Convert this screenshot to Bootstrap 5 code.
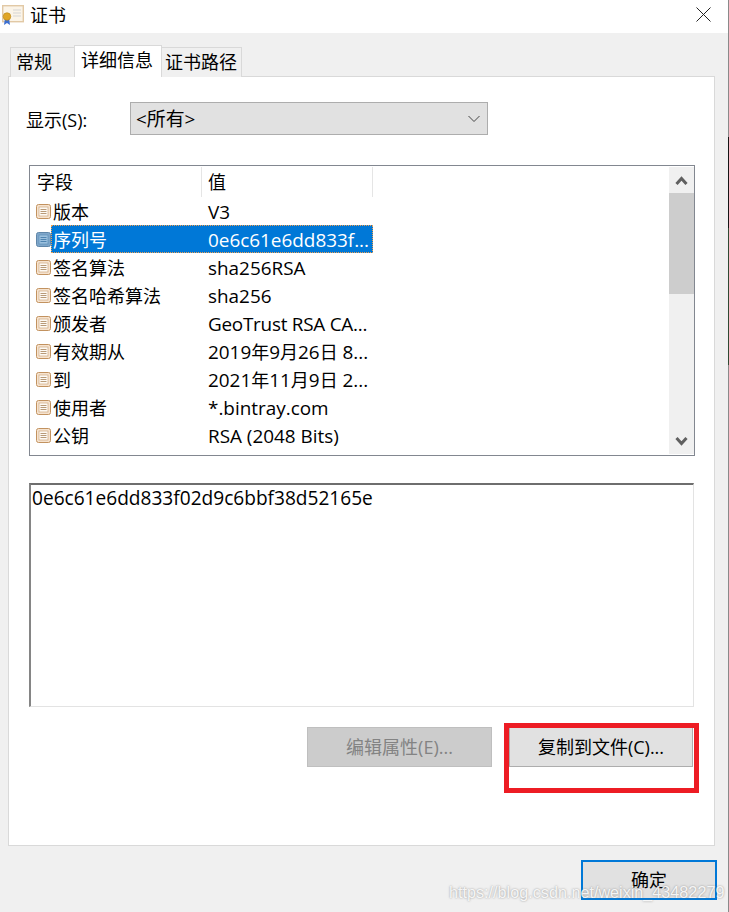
<!DOCTYPE html>
<html lang="zh">
<head>
<meta charset="utf-8">
<title>证书</title>
<link href="https://cdn.jsdelivr.net/npm/bootstrap@5.3.0/dist/css/bootstrap.min.css" rel="stylesheet">
<style>
html,body{height:912px;overflow:hidden}
html{background:linear-gradient(to bottom,#8a8a8a 0,#8a8a8a 137px,#151515 137px,#151515 228px,#2f4a33 228px,#2f4a33 365px,#8a8a8a 365px)}
body{background:transparent;font-family:"Open Sans","Noto Sans CJK SC",sans-serif;font-size:18px;line-height:24px;color:#000}
.dlg{width:728px;height:912px;position:relative;display:flex;flex-direction:column;background:#f0f0f0}
.ttl{height:33px;background:#fff;flex:none;padding-left:2px}
.ttl-i{margin-bottom:3px}
.ttl-t{margin:0 0 4px -2px}
.ttl-x{margin:0 17px 4px 0}
.tabs{height:44px;padding:14px 0 0 10px;flex:none;align-items:flex-end;margin-bottom:-1px;position:relative;z-index:1}
.tb{height:30px;border:1px solid #d9d9d9;border-bottom:0;background:#f0f0f0;line-height:28px;margin-right:-1px;white-space:nowrap}
.tb-a{width:65px;padding-left:5px}
.tb-b{width:88px;padding-left:6px}
.tb-c{width:81px;padding-left:3px}
.tb-on{height:32px;background:#fff;position:relative;z-index:1}
.pane{width:707px;height:770px;margin-left:8px;background:#fff;border:1px solid #d9d9d9;padding:25px 19px 0 20px;flex:none}
.cmb-row{height:33px;margin-bottom:30px}
.cmb-lbl{width:104px;flex:none;margin-left:-3px;margin-top:6px}
.cmb{width:358px;height:33px;background:#e1e1e1;border:1px solid #adadad;padding:0 7px 0 5px;line-height:30px}
.lst{height:291px;border:1px solid #828790;padding:1px;overflow:hidden}
.lst-main{width:638px;flex:none}
.hd{height:30px;line-height:31px}
.hd-a{width:171px;padding-left:6px;border-right:1px solid #e5e5e5}
.hd-b{width:171px;padding-left:6px;border-right:1px solid #e5e5e5}
.rw{height:28px;line-height:30px}
.ico{width:15px;height:15px;margin-left:5px;flex:none;align-self:center}
.rw-in{width:322px;height:28px;padding-left:2px}
.rw-a{width:148px;flex:none;white-space:nowrap}
.rw-b{width:171px;padding-left:7px;white-space:nowrap;flex:none;font-size:18.9px}
.rw-b i{font-style:normal;font-size:18px}
.rw-tight{letter-spacing:-.25px}
.rw-on .rw-in{background:#0078d7;color:#fff;outline:1px dotted #f0a050;outline-offset:-1px}
.sb{width:25px;margin-left:auto;background:#f0f0f0;flex:none}
.sb-btn{height:26px;align-items:center;justify-content:center}
.sb-th{height:101px;background:#cdcdcd}
.sb-end{margin-top:auto}
.txa{margin:27px 1px 0 0;height:224px;border:2px solid;border-color:#6e6e6e #e3e3e3 #e3e3e3 #858585;border-right-width:1px;border-bottom-width:1px;padding:1px 0 0 1px;font-size:19.100px}
.lat{font-size:18.900px}
.acts{margin-top:20px;margin-right:2px;gap:17px;justify-content:flex-end}
.bt{width:184px;height:40px;border-radius:0;font-size:18px;line-height:24px;color:#000;background:#e1e1e1;border:1px solid #adadad;padding:0}
.bt:disabled{background:#cccccc;border-color:#bfbfbf;color:#838383;opacity:1}
.bt-wide{width:185px}
.ft{flex:1;padding-top:14px;padding-right:11px}
.bt-ok{width:136px;border:2px solid #0078d7}
.redbox{position:absolute;left:504px;top:723px;width:195px;height:70px;border:5px solid #ed1c24;pointer-events:none}
.wm{position:absolute;left:449px;top:881px;font-family:"Liberation Sans",sans-serif;font-size:16.200px;line-height:22px;color:rgba(255,255,255,.88);text-shadow:0 0 2px rgba(110,110,110,.75);white-space:nowrap}
</style>
</head>
<body>
<svg width="0" height="0" class="position-absolute">
<symbol id="fld" viewBox="0 0 15 15"><rect x=".5" y=".5" width="14" height="14" rx="2" fill="#f6e3cf" stroke="#c2925f"/><rect x="3" y="3" width="9" height="9" fill="#fdfaf5" stroke="#cda77f" stroke-width=".7"/><path d="M4.500 5.500h6M4.500 7.500h6M4.500 9.500h6" stroke="#b89a78"/></symbol>
<symbol id="fldsel" viewBox="0 0 15 15"><rect x=".5" y=".5" width="14" height="14" rx="2" fill="#7fa6c9" stroke="#5f86a9"/><rect x="3" y="3" width="9" height="9" fill="#9cc0de" stroke="#5c8fb8" stroke-width=".7"/><path d="M4.500 5.500h6M4.500 7.500h6M4.500 9.500h6" stroke="#4f84b0"/></symbol>
</svg>
<div class="dlg">
  <div class="ttl d-flex align-items-center justify-content-between">
    <div class="d-flex align-items-center gap-2">
      <svg class="ttl-i" width="22" height="20" viewBox="0 0 22 20"><rect x=".7" y=".7" width="20.600" height="16" fill="#fbf4e8" stroke="#e2c9a5" stroke-width="1.400"/><path d="M11 5h8M11 8h8M11 11h8" stroke="#d5d5d5"/><path d="M3 13l-1 7 3-2 3 2-1-7z" fill="#3b6fd1"/><circle cx="5" cy="11.500" r="3.800" fill="#e0a526" stroke="#b98414" stroke-width=".6"/></svg>
      <span class="ttl-t">证书</span>
    </div>
    <svg class="ttl-x" width="15" height="15" viewBox="0 0 15 15"><path d="M.5.500l14 14M14.500.500l-14 14" stroke="#222" fill="none"/></svg>
  </div>
  <div class="tabs d-flex">
    <div class="tb tb-a">常规</div>
    <div class="tb tb-b tb-on">详细信息</div>
    <div class="tb tb-c">证书路径</div>
  </div>
  <div class="pane">
    <div class="cmb-row d-flex">
      <div class="cmb-lbl">显示(S):</div>
      <div class="cmb d-flex justify-content-between align-items-center"><span class="lat">&lt;所有&gt;</span>
        <svg width="12" height="8" viewBox="0 0 12 8"><path d="M.5 1l5.500 5.500L11.500 1" fill="none" stroke="#444"/></svg></div>
    </div>
    <div class="lst d-flex">
      <div class="lst-main">
        <div class="hd d-flex"><div class="hd-a">字段</div><div class="hd-b">值</div></div>
        <div class="rw d-flex"><svg class="ico"><use href="#fld"/></svg><div class="rw-in d-flex"><div class="rw-a">版本</div><div class="rw-b">V3</div></div></div>
        <div class="rw rw-on d-flex"><svg class="ico"><use href="#fldsel"/></svg><div class="rw-in d-flex"><div class="rw-a">序列号</div><div class="rw-b">0e6c61e6dd833f...</div></div></div>
        <div class="rw d-flex"><svg class="ico"><use href="#fld"/></svg><div class="rw-in d-flex"><div class="rw-a">签名算法</div><div class="rw-b">sha256RSA</div></div></div>
        <div class="rw d-flex"><svg class="ico"><use href="#fld"/></svg><div class="rw-in d-flex"><div class="rw-a">签名哈希算法</div><div class="rw-b">sha256</div></div></div>
        <div class="rw d-flex"><svg class="ico"><use href="#fld"/></svg><div class="rw-in d-flex"><div class="rw-a">颁发者</div><div class="rw-b rw-tight">GeoTrust RSA CA...</div></div></div>
        <div class="rw d-flex"><svg class="ico"><use href="#fld"/></svg><div class="rw-in d-flex"><div class="rw-a">有效期从</div><div class="rw-b">2019<i>年</i>9<i>月</i>26<i>日</i> 8...</div></div></div>
        <div class="rw d-flex"><svg class="ico"><use href="#fld"/></svg><div class="rw-in d-flex"><div class="rw-a">到</div><div class="rw-b">2021<i>年</i>11<i>月</i>9<i>日</i> 2...</div></div></div>
        <div class="rw d-flex"><svg class="ico"><use href="#fld"/></svg><div class="rw-in d-flex"><div class="rw-a">使用者</div><div class="rw-b">*.bintray.com</div></div></div>
        <div class="rw d-flex"><svg class="ico"><use href="#fld"/></svg><div class="rw-in d-flex"><div class="rw-a">公钥</div><div class="rw-b">RSA (2048 Bits)</div></div></div>
      </div>
      <div class="sb d-flex flex-column">
        <div class="sb-btn d-flex"><svg width="13" height="9" viewBox="0 0 13 9"><path d="M1.500 8l5-5.500 5 5.500" fill="none" stroke="#606060" stroke-width="3"/></svg></div>
        <div class="sb-th"></div>
        <div class="sb-btn sb-end d-flex"><svg width="13" height="9" viewBox="0 0 13 9"><path d="M1.500 1l5 5.500 5-5.500" fill="none" stroke="#606060" stroke-width="3"/></svg></div>
      </div>
    </div>
    <div class="txa">0e6c61e6dd833f02d9c6bbf38d52165e</div>
    <div class="acts d-flex">
      <button class="btn bt bt-wide" disabled>编辑属性(E)...</button>
      <button class="btn bt">复制到文件(C)...</button>
    </div>
  </div>
  <div class="ft d-flex justify-content-end">
    <button class="btn bt bt-ok">确定</button>
  </div>
  <div class="redbox"></div>
  <div class="wm">https://blog.csdn.net/weixin_43482279</div>
</div>
<script src="https://cdn.jsdelivr.net/npm/bootstrap@5.3.0/dist/js/bootstrap.bundle.min.js"></script>
</body>
</html>
